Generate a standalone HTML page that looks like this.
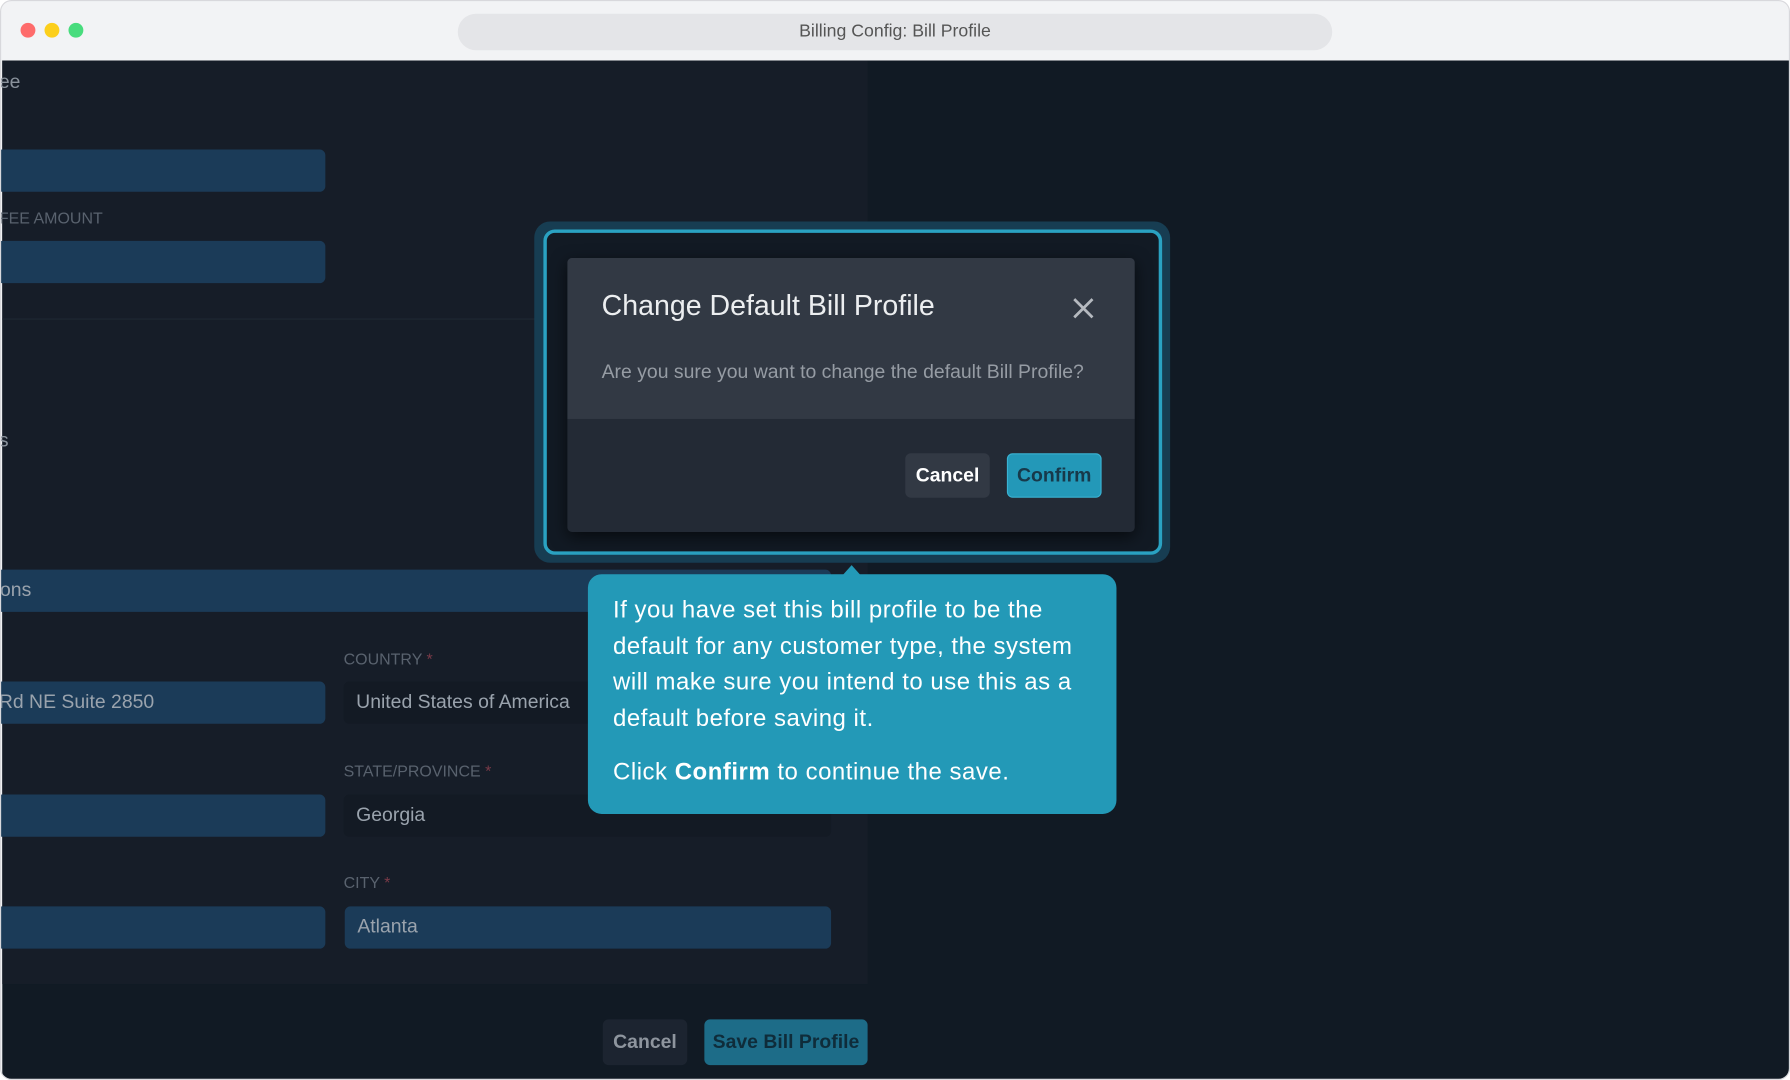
<!DOCTYPE html>
<html><head><meta charset="utf-8"><style>
html,body{margin:0;padding:0;width:1790px;height:1080px;overflow:hidden;background:#fff;}
#s{position:absolute;left:0;top:0;width:1568px;height:946px;transform:scale(1.14158);transform-origin:0 0;font-family:"Liberation Sans",sans-serif;}
.a{position:absolute;box-sizing:border-box;}
.in{background:#1b3b58;border-radius:5px;}
.lab{color:#59626e;font-size:14px;}
.lab b{color:#7a3a48;font-weight:normal;}
.val{color:#9aa3ad;font-size:17px;padding-left:11px;line-height:36px;}
</style></head><body><div id="s">
<div class="a" style="left:0;top:0;width:1568px;height:946px;border:1px solid #d8d8dc;border-radius:10px;background:#f2f3f5;overflow:hidden">
 <div class="a" style="left:17px;top:19px;width:13px;height:13px;border-radius:50%;background:#fe6b6b"></div>
 <div class="a" style="left:38px;top:19px;width:13px;height:13px;border-radius:50%;background:#fccf1c"></div>
 <div class="a" style="left:59px;top:19px;width:13px;height:13px;border-radius:50%;background:#48dc7d"></div>
 <div class="a" style="left:400px;top:11px;width:766px;height:32px;border-radius:16px;background:#e4e5e8;color:#555;font-size:15.5px;text-align:center;line-height:32px">Billing Config: Bill Profile</div>
 <div class="a" style="left:1px;top:52px;width:1566px;height:893px;background:#111a24">
  <div class="a" style="left:0;top:0;width:758px;height:809px;background:#161d28"></div>
  <div class="a" style="left:0;top:226px;width:758px;height:1px;background:#1f2833"></div>
  <div class="a" style="left:-3px;top:9px;color:#8a929c;font-size:17px">ee</div>
  <div class="a in" style="left:-5px;top:78px;width:288px;height:37px"></div>
  <div class="a lab" style="left:-3px;top:130px">FEE AMOUNT</div>
  <div class="a in" style="left:-5px;top:158px;width:288px;height:37px"></div>
  <div class="a" style="left:-3px;top:323px;color:#8a929c;font-size:17px">s</div>
  <div class="a in" style="left:-5px;top:446px;width:731px;height:37px"><div class="val" style="padding-left:3px">ons</div></div>
  <div class="a lab" style="left:299px;top:516px">COUNTRY <b>*</b></div>
  <div class="a in" style="left:-5px;top:544px;width:288px;height:37px"><div class="val" style="padding-left:2px">Rd NE Suite 2850</div></div>
  <div class="a" style="left:299px;top:544px;width:427px;height:37px;background:#131a24;border-radius:5px"><div class="val">United States of America</div></div>
  <div class="a lab" style="left:299px;top:614px">STATE/PROVINCE <b>*</b></div>
  <div class="a in" style="left:-5px;top:643px;width:288px;height:37px"></div>
  <div class="a" style="left:299px;top:643px;width:427px;height:37px;background:#131a24;border-radius:5px"><div class="val">Georgia</div></div>
  <div class="a lab" style="left:299px;top:712px">CITY <b>*</b></div>
  <div class="a in" style="left:-5px;top:741px;width:288px;height:37px"></div>
  <div class="a in" style="left:300px;top:741px;width:426px;height:37px"><div class="val">Atlanta</div></div>
  <div class="a" style="left:526px;top:840px;width:74px;height:40px;background:#1c2430;border-radius:5px;color:#8e959e;font-weight:bold;font-size:17px;text-align:center;line-height:40px">Cancel</div>
  <div class="a" style="left:615px;top:840px;width:143px;height:40px;background:#1d6c88;border-radius:5px;color:#0f2c3a;font-weight:bold;font-size:17px;text-align:center;line-height:40px">Save Bill Profile</div>
 </div>
</div>
<div class="a" style="left:468px;top:194px;width:557px;height:299px;border-radius:14px;background:#173d52"></div>
<div class="a" style="left:476px;top:201px;width:542px;height:285px;border-radius:10px;border:3px solid #2aa2c2;background:#121a24"></div>
<div class="a" style="left:497px;top:226px;width:497px;height:240px;border-radius:4px;background:#232a35;box-shadow:0 4px 14px rgba(0,0,0,.6);overflow:hidden">
 <div class="a" style="left:0;top:0;width:497px;height:141px;background:#323944"></div>
 <div class="a" style="left:30px;top:28px;color:#eceef0;font-size:25px">Change Default Bill Profile</div>
 <svg class="a" style="left:443px;top:35px" width="18" height="18" viewBox="0 0 18 18"><path d="M1 1L17 17M17 1L1 17" stroke="#b5b9bf" stroke-width="2.4"/></svg>
 <div class="a" style="left:30px;top:90px;color:#969ca4;font-size:17px">Are you sure you want to change the default Bill Profile?</div>
 <div class="a" style="left:296px;top:171px;width:74px;height:39px;background:#323944;border-radius:5px;color:#fff;font-weight:bold;font-size:17px;text-align:center;line-height:39px">Cancel</div>
 <div class="a" style="left:385px;top:171px;width:83px;height:39px;background:#2398b8;border:1px solid #3ab2d2;border-radius:5px;color:#17394a;font-weight:bold;font-size:17px;text-align:center;line-height:37px">Confirm</div>
</div>
<div class="a" style="left:738px;top:495px;width:0;height:0;border-left:8px solid transparent;border-right:8px solid transparent;border-bottom:9px solid #2399b7"></div>
<div class="a" style="left:515px;top:503px;width:463px;height:210px;border-radius:12px;background:#2399b7;color:#fff;font-size:21px;line-height:31.5px;padding:16px 20px 0 22px;letter-spacing:0.45px">If you have set this bill profile to be the default for any customer type, the system will make sure you intend to use this as a default before saving it.<div style="margin-top:16px">Click <b>Confirm</b> to continue the save.</div></div>
</div></body></html>
